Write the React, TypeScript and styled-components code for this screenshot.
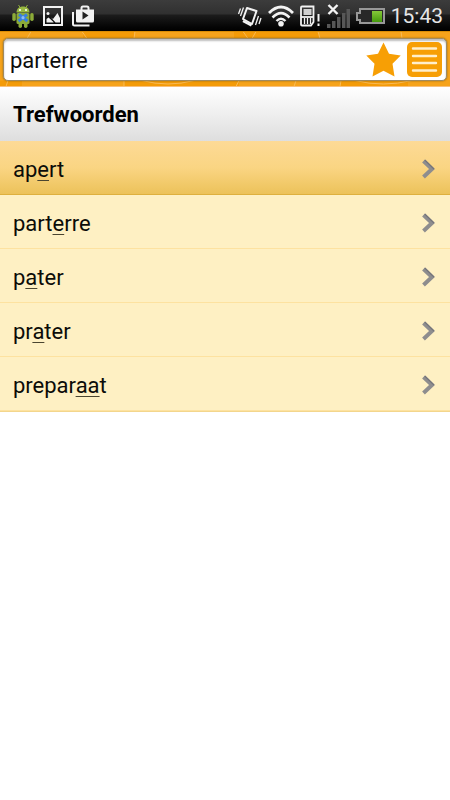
import React, { useState } from "react";
import styled, { createGlobalStyle } from "styled-components";

const GlobalStyle = createGlobalStyle`
  *, *::before, *::after { box-sizing: border-box; }
  body {
    margin: 0;
    background: #fff;
    color: #0c0c08;
    font-family: Roboto, "Liberation Sans", sans-serif;
    font-size: 22px;
  }
`;

const StatusBar = styled.header`
  display: flex;
  justify-content: space-between;
  align-items: center;
  height: 31px;
  padding: 0 7px 0 12px;
  background: linear-gradient(#3c3c3c 0, #303030 14px, #1c1c1c 15px, #050505 27px, #000 100%);
`;

const IconGroup = styled.div<{ $gap: number }>`
  display: flex;
  align-items: center;
  gap: ${(p) => p.$gap}px;

  svg { display: block; }
`;

const Clock = styled.time`
  font-size: 21px;
  line-height: 30px;
  color: #e6e6e6;
`;

const SearchBar = styled.form`
  position: relative;
  padding: 6px 3px 5px;
  background: #f6a31b;
  border-bottom: 1px solid #f9c07a;
  border-top: 1px solid #d98c05;
`;

const Pattern = styled.svg`
  position: absolute;
  inset: 0;
  width: 100%;
  height: 100%;
`;

const SearchField = styled.div`
  position: relative;
  display: flex;
  align-items: center;
  gap: 6px;
  height: 43px;
  padding: 0 4px 0 6px;
  background: #fff;
  border: 1px solid #a08a60;
  border-radius: 5px;
  box-shadow: 0 0 2px #8a6414, inset 0 2px 2px #bdbdbd;
`;

const SearchInput = styled.input`
  flex: 1;
  min-width: 0;
  padding: 2px 0 0;
  border: 0;
  outline: 0;
  background: transparent;
  color: #0c0c0c;
  font: inherit;
  line-height: 38px;
`;

const IconButton = styled.button`
  display: block;
  padding: 0;
  border: 0;
  background: none;
  cursor: pointer;

  svg { display: block; }
`;

const SectionTitle = styled.h1`
  margin: 0;
  padding: 1px 13px 0;
  font-size: 22px;
  font-weight: 700;
  line-height: 53px;
  color: #000;
  background: linear-gradient(#fff, #dedede);
`;

const WordList = styled.ul`
  margin: 0;
  padding: 0;
  list-style: none;
  border-bottom: 1px solid #f3d68c;
`;

const WordLink = styled.a<{ $active?: boolean }>`
  display: flex;
  justify-content: space-between;
  align-items: center;
  height: 54px;
  padding: 2px 15px 0 13px;
  color: inherit;
  text-decoration: none;
  background: ${(p) =>
    p.$active ? "linear-gradient(#fdda96, #fad583 50%, #ecc25a)" : "#fef0c3"};
  border-bottom: 1px solid ${(p) => (p.$active ? "#deb03e" : "#fde2a0")};

  svg { display: block; }
`;

const Word = styled.span`
  padding-top: 2px;
`;

const Stress = styled.span`
  text-decoration: underline;
  text-decoration-thickness: 1px;
  text-decoration-color: #4a4530;
  text-underline-offset: 3px;
  text-decoration-skip-ink: none;
`;

const AndroidIcon = () => (
  <svg width="22" height="24" viewBox="0 0 22 24" aria-hidden="true">
    <path d="M6.500 1l2 3M15.500 1l-2 3" stroke="#8fae3c" strokeWidth="1" />
    <path d="M4.500 8.500C4.500 4.500 7.500 2.500 11 2.500s6.500 2 6.500 6z" fill="#98b840" />
    <circle cx="8" cy="6" r="1" fill="#fff" />
    <circle cx="14" cy="6" r="1" fill="#fff" />
    <rect x="4.500" y="9" width="13" height="11" rx="1.500" fill="#8cab38" />
    <rect x="0.300" y="9" width="3.500" height="8" rx="1.700" fill="#8cab38" />
    <rect x="18.200" y="9" width="3.500" height="8" rx="1.700" fill="#8cab38" />
    <rect x="6.500" y="17" width="3.500" height="7" rx="1.700" fill="#8cab38" />
    <rect x="12" y="17" width="3.500" height="7" rx="1.700" fill="#8cab38" />
    <path d="M7 10.500l8.500 6.500M15 10.500l-8.500 6.500" stroke="#377fe0" strokeWidth="3" />
    <circle cx="11" cy="13.700" r="1.600" fill="#8dbcf8" />
  </svg>
);

const PictureIcon = () => (
  <svg width="20" height="20" viewBox="0 0 20 20" aria-hidden="true">
    <rect x="1" y="1" width="18" height="18" fill="none" stroke="#f2f2f2" strokeWidth="2" />
    <circle cx="5" cy="7.500" r="1.500" fill="#f2f2f2" />
    <path d="M3.500 16.500V13l2-1.500 5 4.500v.5zM8 11.500l2 1.500 4.500-6 2.500 5v4.500h-4.500z" fill="#f2f2f2" />
  </svg>
);

const PlayBagIcon = () => (
  <svg width="23" height="22" viewBox="0 0 23 22" aria-hidden="true">
    <path d="M1 7v12q0 1.500 1.500 1.500h15" fill="none" stroke="#f2f2f2" strokeWidth="2" />
    <path d="M9.500 5V3q0-1.500 1.500-1.500h4q1.500 0 1.500 1.500v2" fill="none" stroke="#f2f2f2" strokeWidth="2" />
    <path d="M4 4.500h18V16q0 1.500-1.500 1.500H5.500Q4 17.500 4 16z" fill="#f2f2f2" />
    <path d="M10.500 6.500v8l6-4z" fill="#222" />
  </svg>
);

const VibrateIcon = () => (
  <svg width="24" height="24" viewBox="0 0 24 24" fill="none" stroke="#f2f2f2" aria-hidden="true">
    <path d="M9 4l9.500 3-4.500 13-9-5z" strokeWidth="2" strokeLinejoin="round" />
    <path d="M5 17l8.500 4.500" strokeWidth="2.400" />
    <path d="M5.500 3.500L2.500 12M2.500 4.500L.5 10M20.500 12l-3 9M23 14l-2 6" strokeWidth="1.300" />
  </svg>
);

const WifiIcon = () => (
  <svg width="26" height="22" viewBox="0 0 26 22" fill="none" stroke="#f2f2f2" aria-hidden="true">
    <path d="M1 8Q13-4 25 8" strokeWidth="2.800" />
    <path d="M4.500 12.500Q13 4 21.500 12.500" strokeWidth="2.600" />
    <path d="M8.500 16Q13 11.500 17.500 16" strokeWidth="2.400" />
    <circle cx="13" cy="18.800" r="2.800" fill="#f2f2f2" stroke="none" />
  </svg>
);

const StorageIcon = () => (
  <svg width="20" height="22" viewBox="0 0 20 22" fill="none" stroke="#f2f2f2" aria-hidden="true">
    <path d="M1 2.500Q1 1.500 2 1.500h11.500V17L11 20.500H2q-1 0-1-1z" strokeWidth="1.800" />
    <rect x="3.500" y="4" width="8" height="6" fill="#cfcfcf" stroke="none" />
    <path d="M1 12h13" strokeWidth="1.800" />
    <path d="M4.500 13v6M7.500 13v6M10.500 13v6" strokeWidth="1.300" />
    <path d="M18.500 9v7.500M18.500 18.500v2.500" strokeWidth="2" />
  </svg>
);

const SignalIcon = () => (
  <svg width="24" height="26" viewBox="0 0 24 26" aria-hidden="true">
    <path d="M1 21h3.500v4H1zM6 18h3.500v7H6zM11 14h3.500v11H11zM16 10h3.500v15H16zM20.500 6H24v19h-3.500z" fill="#575757" />
    <path d="M2.500 2l9 9M11.500 2l-9 9" stroke="#f5f5f5" strokeWidth="2.400" />
  </svg>
);

const BatteryIcon = () => (
  <svg width="29" height="18" viewBox="0 0 29 18" aria-hidden="true">
    <defs>
      <linearGradient id="charge" x1="0" y1="0" x2="0" y2="1">
        <stop offset="0" stopColor="#86c83a" />
        <stop offset="1" stopColor="#459a0c" />
      </linearGradient>
    </defs>
    <path d="M4 2h24v14H4v-3H1V6h3z" fill="#282828" stroke="#989898" strokeWidth="2" />
    <rect x="16" y="4" width="10" height="11" fill="url(#charge)" />
  </svg>
);

const StarIcon = () => (
  <svg width="35" height="35" viewBox="0 0 35 35" aria-hidden="true">
    <path
      d="M17.500 0.500L23 11.800l11.700 1.600-8.200 8.400L28.500 34.500l-11-5.700-11 5.700 2-12.700L.3 13.400 12 11.800z"
      fill="#f79f05"
    />
  </svg>
);

const MenuIcon = () => (
  <svg width="35" height="35" viewBox="0 0 35 35" aria-hidden="true">
    <rect width="35" height="35" rx="5" fill="#f79f05" />
    <path d="M6 6.500h23M6 14h23M6 21h23M6 28.500h23" stroke="#ffefcc" strokeWidth="2.400" strokeLinecap="round" />
  </svg>
);

const Chevron = () => (
  <svg width="13" height="20" viewBox="0 0 13 20" fill="none" aria-hidden="true">
    <path d="M1.500 2l8.500 8-8.500 8" stroke="#8e8d8e" strokeWidth="4" />
    <path d="M2.800 1l9.200 9" stroke="#74747a" strokeWidth="1.200" />
  </svg>
);

const words = [
  ["ap", "e", "rt"],
  ["part", "e", "rre"],
  ["p", "a", "ter"],
  ["pr", "a", "ter"],
  ["prepar", "aa", "t"],
];

export default function App() {
  const [query, setQuery] = useState("parterre");

  return (
    <>
      <GlobalStyle />
      <StatusBar>
        <IconGroup $gap={9}>
          <AndroidIcon />
          <PictureIcon />
          <PlayBagIcon />
        </IconGroup>
        <IconGroup $gap={6}>
          <VibrateIcon />
          <WifiIcon />
          <StorageIcon />
          <SignalIcon />
          <BatteryIcon />
          <Clock>15:43</Clock>
        </IconGroup>
      </StatusBar>
      <SearchBar role="search" onSubmit={(e) => e.preventDefault()}>
        <Pattern viewBox="0 0 450 55" preserveAspectRatio="xMidYMid slice" aria-hidden="true">
          <path d="M83 0h51v7H83zM234 0h85v7h-85zM0 49h22v6H0zM124 49h115v6H124zM340 49h68v6h-68z" fill="#f49b08" />
          <path
            d="M31 0l-4 7M82 0l5 7M135 0l-1 7M243 0l5 7M256 0l-4 7M318 0l2 7M401 0l1 7M8 49l-2 6M124 49v6M239 49l-3 6M296 49l-2 6M341 49l-1 6M142 49q26 7 52 0M355 49q28 7 57 0"
            fill="none"
            stroke="#f9ba55"
            strokeWidth="1"
          />
        </Pattern>
        <SearchField>
          <SearchInput
            type="text"
            aria-label="Zoeken"
            value={query}
            onChange={(e) => setQuery(e.target.value)}
          />
          <IconButton type="button" aria-label="Favorieten">
            <StarIcon />
          </IconButton>
          <IconButton type="button" aria-label="Menu">
            <MenuIcon />
          </IconButton>
        </SearchField>
      </SearchBar>
      <main>
        <SectionTitle>Trefwoorden</SectionTitle>
        <WordList>
          {words.map(([before, stress, after], i) => (
            <li key={before + stress + after}>
              <WordLink href="#" $active={i === 0}>
                <Word>
                  {before}
                  <Stress>{stress}</Stress>
                  {after}
                </Word>
                <Chevron />
              </WordLink>
            </li>
          ))}
        </WordList>
      </main>
    </>
  );
}
